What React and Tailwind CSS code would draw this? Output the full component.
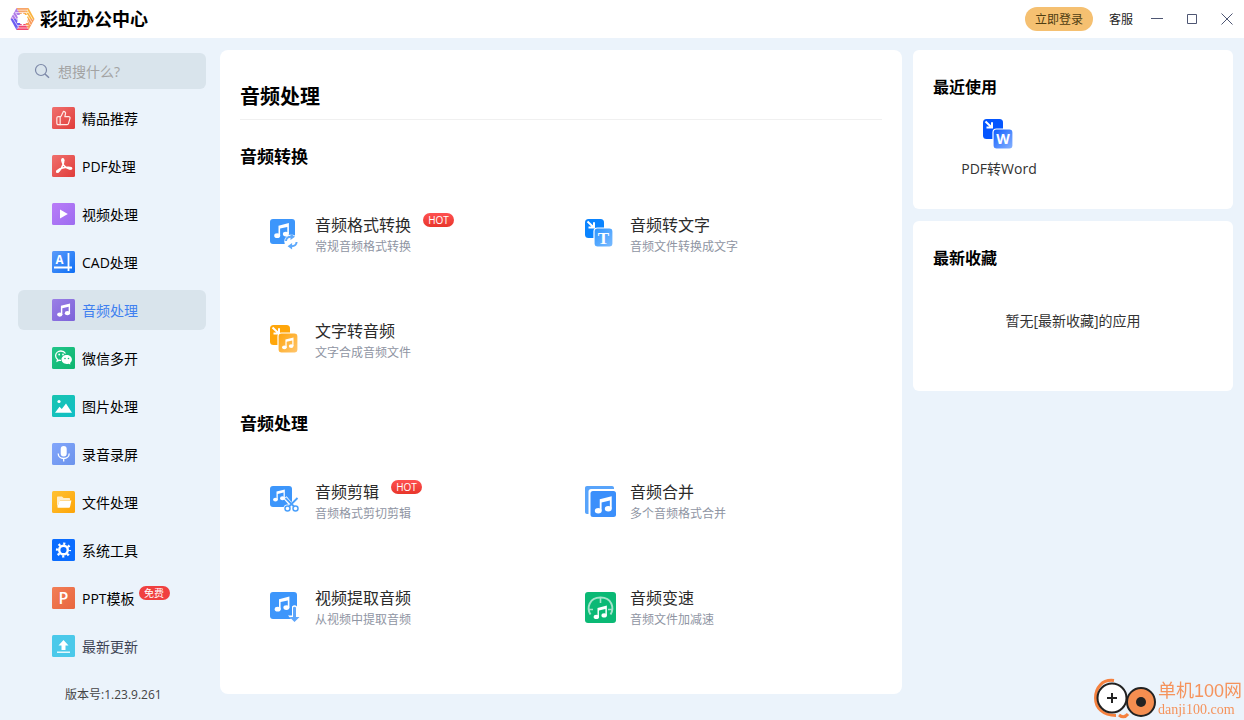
import React, { useState } from "react";
import { ThumbsUp } from "lucide-react";

const Tile = ({ from, to, children }) => {
  const id = `tile-${from}-${to}`.replaceAll("#", "");
  return (
    <svg width="23" height="22" viewBox="0 0 23 22" className="shrink-0" aria-hidden="true">
      <defs>
        <linearGradient id={id} x1="0" y1="0" x2="1" y2="1">
          <stop offset="0" stopColor={from} />
          <stop offset="1" stopColor={to} />
        </linearGradient>
      </defs>
      <rect width="23" height="22" rx="1.5" fill={`url(#${id})`} />
      {children}
    </svg>
  );
};

// double music note on a 16x16 box
const Note = ({ x, y, scale = 1, fill = "#fff" }) => (
  <g transform={`translate(${x} ${y}) scale(${scale})`} fill={fill}>
    <path d="M5 3.2 15.4.6v11H13.8V4.4L6.6 6.1v7.2H5z" />
    <ellipse cx="3.7" cy="13.2" rx="3" ry="2.4" />
    <ellipse cx="12.4" cy="11.6" rx="3" ry="2.4" />
  </g>
);

const navItems = [
  {
    name: "精品推荐",
    icon: (
      <Tile from="#f0706e" to="#e03c3a">
        <ThumbsUp x="3.5" y="3" width="16" height="16" color="#ffe9e6" strokeWidth={1.8} />
      </Tile>
    ),
  },
  {
    name: "PDF处理",
    icon: (
      <Tile from="#f0706e" to="#e03c3a">
        <path
          d="M10.6 3.8c1.6-.2 1.3 3 .4 5.800-1 2.900-4 7.800-5.800 7.700-1.600-.3.6-3 5.300-4.200 3.700-1 9-1.100 9.100.3 0 1.500-4.800.3-7.400-2.600-1.900-2.200-3.200-6.700-1.600-7z"
          fill="none"
          stroke="#fff"
          strokeWidth="1.500"
          strokeLinejoin="round"
        />
        <circle cx="5.800" cy="16.200" r="1.500" fill="#fff" />
        <circle cx="18.200" cy="13.300" r="1.300" fill="#fff" />
        <circle cx="10.900" cy="5.200" r="1.300" fill="#fff" />
      </Tile>
    ),
  },
  {
    name: "视频处理",
    icon: (
      <Tile from="#b97cf8" to="#9d6cf0">
        <path d="M8 6.500 15.800 11 8 15.500z" fill="#fff" />
      </Tile>
    ),
  },
  {
    name: "CAD处理",
    icon: (
      <Tile from="#5b9bfa" to="#0e6ff5">
        <text x="3.500" y="13" fontSize="11.500" fontWeight="700" fill="#fff">A</text>
        <path d="M16.500 2v18M2 16.500h18" stroke="#fff" strokeWidth="1.800" />
      </Tile>
    ),
  },
  {
    name: "音频处理",
    icon: (
      <Tile from="#9b80e6" to="#7c62d9">
        <Note x={4.5} y={4} scale={0.88} />
      </Tile>
    ),
  },
  {
    name: "微信多开",
    icon: (
      <Tile from="#22c58a" to="#0db56f">
        <path
          d="M13.500 6.500C12.600 5 10.900 4 8.900 4 5.900 4 3.600 6.100 3.600 8.700c0 1.500.8 2.800 2 3.700L5.200 14l2-.9c.6.2 1.200.3 1.800.3"
          fill="none"
          stroke="#fff"
          strokeWidth="1.300"
        />
        <circle cx="7.200" cy="7.500" r=".9" fill="#fff" />
        <circle cx="11" cy="7.500" r=".9" fill="#fff" />
        <path d="M14.700 8c2.900 0 5.200 2 5.200 4.500 0 1.400-.7 2.600-1.800 3.400l.3 1.700-1.900-.9c-.6.1-1.200.2-1.800.2-2.900 0-5.200-2-5.200-4.400S11.800 8 14.700 8z" fill="#fff" />
        <circle cx="13" cy="11.500" r=".8" fill="#19bf7e" />
        <circle cx="16.500" cy="11.500" r=".8" fill="#19bf7e" />
      </Tile>
    ),
  },
  {
    name: "图片处理",
    icon: (
      <Tile from="#19c4b0" to="#11bfc6">
        <circle cx="7" cy="6.500" r="1.600" fill="#fff" />
        <path d="M3 17.800 7.500 11.800 9.800 14 14 8.600 20 17.800z" fill="#fff" />
      </Tile>
    ),
  },
  {
    name: "录音录屏",
    icon: (
      <Tile from="#82a6fb" to="#6c93ec">
        <rect x="8.700" y="3" width="6" height="10.500" rx="3" fill="#fff" />
        <path d="M6.200 10.500c0 3 2.300 5 5.500 5s5.500-2 5.500-5M11.700 15.500v3" fill="none" stroke="#fff" strokeWidth="1.300" />
      </Tile>
    ),
  },
  {
    name: "文件处理",
    icon: (
      <Tile from="#ffc234" to="#fda408">
        <path d="M5 16V6.500c0-.6.400-1 1-1h4l1.600 1.500h5.400c.6 0 1 .4 1 1v1H8.200z" fill="#ffeecb" />
        <path d="M7.600 9.400h11.800L18 16c-.1.500-.5.800-1 .8H6c-.4 0-.7-.4-.6-.8z" fill="#fff" />
      </Tile>
    ),
  },
  {
    name: "系统工具",
    icon: (
      <Tile from="#0a6cff" to="#0a6cff">
        <circle cx="11.500" cy="11" r="4.300" fill="none" stroke="#fff" strokeWidth="2.400" />
        <circle cx="11.500" cy="11" r="6.400" fill="none" stroke="#fff" strokeWidth="2.400" strokeDasharray="2.200 2.827" strokeDashoffset="1.100" />
      </Tile>
    ),
  },
  {
    name: "PPT模板",
    badge: "免费",
    icon: (
      <Tile from="#f27e57" to="#e8663e">
        <text x="6.500" y="16.500" fontSize="16" fontWeight="600" fill="#fff">P</text>
      </Tile>
    ),
  },
  {
    name: "最新更新",
    muted: true,
    icon: (
      <Tile from="#4bc9ea" to="#4bc9ea">
        <path d="M11.500 5 16.500 10.500h-3v4.500h-4v-4.500h-3z" fill="#fff" />
        <path d="M5 17.200h13" stroke="#fff" strokeWidth="1.300" />
      </Tile>
    ),
  },
];

const ToolSvg = ({ children }) => (
  <svg width="32" height="32" viewBox="0 0 32 32" className="shrink-0" aria-hidden="true">
    {children}
  </svg>
);

// two stacked squares with an arrow going from the back one to the front one
const ConvertIcon = ({ id, back, from, to, size = 20, offset = 9, children }) => (
  <ToolSvg>
    <defs>
      <linearGradient id={id} x1="0" y1="0" x2="1" y2="1">
        <stop offset="0" stopColor={from} />
        <stop offset="1" stopColor={to} />
      </linearGradient>
    </defs>
    <rect x="0" y="1" width={size} height={size} rx="3.500" fill={back} />
    <path d="M2.500 3.500 8.300 9M9 4.200v5.300H3.500" fill="none" stroke="#fff" strokeWidth="2" />
    <rect x={offset} y={offset + 1} width={size} height={size} rx="3.500" fill={`url(#${id})`} stroke="#fff" strokeWidth="1.200" />
    {children}
  </ToolSvg>
);

const sections = [
  {
    title: "音频转换",
    tools: [
      {
        name: "音频格式转换",
        desc: "常规音频格式转换",
        hot: true,
        icon: (
          <ToolSvg>
            <rect x="0" y="1" width="25" height="25" rx="3" fill="#3d96fb" />
            <Note x={3.5} y={4.5} scale={1} />
            <circle cx="21.300" cy="23.500" r="7" fill="#fff" />
            <path d="M16 23c.2-2.700 2-4.200 5-4.200M26.600 24c-.2 2.700-2 4.200-5 4.200" fill="none" stroke="#5ea9fc" strokeWidth="2" />
            <path d="M20.500 15.500 25 18.800l-4.500 3.300zM22.100 31.500l-4.500-3.300 4.500-3.300z" fill="#5ea9fc" />
          </ToolSvg>
        ),
      },
      {
        name: "音频转文字",
        desc: "音频文件转换成文字",
        icon: (
          <ConvertIcon id="cv-text" back="#0a84ff" from="#2b93ff" to="#7cbcff" size={19}>
            <text x="18.500" y="25.500" fontSize="17" fontWeight="700" textAnchor="middle" fill="#fff" className="font-['Liberation_Serif',serif]">T</text>
          </ConvertIcon>
        ),
      },
      {
        name: "文字转音频",
        desc: "文字合成音频文件",
        icon: (
          <ConvertIcon id="cv-audio" back="#ffa60a" from="#ffa40a" to="#ffc670" offset={8}>
            <Note x={11.500} y={13} scale={0.78} />
          </ConvertIcon>
        ),
      },
    ],
  },
  {
    title: "音频处理",
    tools: [
      {
        name: "音频剪辑",
        desc: "音频格式剪切剪辑",
        hot: true,
        icon: (
          <ToolSvg>
            <rect x="0" y="1" width="22" height="21" rx="3" fill="#3d96fb" />
            <Note x={2.500} y={4} scale={0.8} />
            <path d="M15 12.500 24 23M28 13 18.500 23" stroke="#fff" strokeWidth="4" />
            <circle cx="17.500" cy="23.500" r="4" fill="#fff" />
            <path d="M15.500 13 24.500 22M27.500 13 18.500 22" stroke="#4ba0fb" strokeWidth="1.800" />
            <circle cx="17.500" cy="23.500" r="2.500" fill="#fff" stroke="#4ba0fb" strokeWidth="1.500" />
            <circle cx="25.500" cy="23.500" r="2.500" fill="#fff" stroke="#4ba0fb" strokeWidth="1.500" />
          </ToolSvg>
        ),
      },
      {
        name: "音频合并",
        desc: "多个音频格式合并",
        icon: (
          <ToolSvg>
            <path d="M2 1h25c1.200 0 2 .8 2 2v1H6C4.500 4 3.500 5 3.500 6.500V29H2c-1.200 0-2-.8-2-2V3c0-1.200.8-2 2-2z" fill="#58a4fb" />
            <rect x="5.500" y="6" width="25.500" height="26" rx="2.500" fill="#3b8ffb" />
            <Note x={9} y={10.500} scale={1.15} />
          </ToolSvg>
        ),
      },
      {
        name: "视频提取音频",
        desc: "从视频中提取音频",
        icon: (
          <ToolSvg>
            <rect x="0" y="1" width="27" height="27" rx="3" fill="#3d96fb" />
            <Note x={4} y={5} scale={1} />
            <path d="M22 15.500q2.500-2.500 5 0v9h4l-6.500 7-6.500-7h4z" fill="#fff" />
            <path d="M23 16.500q1.500-1.500 3 0v9.500h3.500L24.500 31l-5-5H23z" fill="#5ea6fb" />
          </ToolSvg>
        ),
      },
      {
        name: "音频变速",
        desc: "音频文件加减速",
        icon: (
          <ToolSvg>
            <rect x="0" y="1" width="31" height="31" rx="3" fill="#0bb975" />
            <path d="M5.500 23.500C1.500 17 4 6.500 15.500 6.500S29.500 17 25.500 23.500" fill="none" stroke="#a5e3cb" strokeWidth="2" />
            <path d="M15.500 7v5M4 18.500h4M27 18.500h-4" stroke="#a5e3cb" strokeWidth="1.600" />
            <Note x={8} y={14} scale={0.9} />
          </ToolSvg>
        ),
      },
    ],
  },
];

const Logo = () => (
  <svg width="25" height="24" viewBox="0 0 25 24" aria-hidden="true">
    <path d="M6.500 1h12l-2.800 6H8.500z" fill="#f7a56a" />
    <path d="M18.500 1 24.500 12H18L14.500 7z" fill="#fbb33f" />
    <path d="M24.500 12 18.500 23 15.500 17 18 12z" fill="#f99a57" />
    <path d="M18.500 23h-12l3-6h6z" fill="#f2456d" />
    <path d="M6.500 23 .5 12H7l3.500 5z" fill="#6d5df2" />
    <path d="M.5 12 6.500 1l3.500 6-3 5z" fill="#b07be8" />
    <path
      d="M4.700 4.500 9 11M3.200 7 9 16M1.800 9.800 9 21M7 3.200h11M6 5.500h12M17 3l6 10M15.500 4.800 22 15.500M15 8l5.500 10M7.500 18.500h11M6.500 21h12"
      stroke="#fff"
      strokeWidth=".8"
      opacity=".8"
    />
    <path d="M12.500 5.500 14.500 8h3.600L16.600 12l1.500 4h-3.600L12.500 18.500l-2-2.500H6.900L8.400 12 6.900 8h3.600z" fill="#fff" />
  </svg>
);

const Header = () => (
  <header className="flex h-[38px] items-center bg-white pr-[11px] pl-[10px]">
    <Logo />
    <h1 className="ml-[5px] text-lg font-bold">彩虹办公中心</h1>
    <button className="ml-auto h-6 w-[68px] rounded-full bg-[#f5c071] pt-0.5 text-xs text-[#4f3d12]">立即登录</button>
    <button className="mr-[18px] ml-4 pt-0.5 text-xs text-[#222]">客服</button>
    <div className="flex gap-[23px] text-[#4e5673]">
      <button aria-label="最小化">
        <svg width="12" height="12" viewBox="0 0 12 12">
          <path d="M0 5.500h12" stroke="currentColor" />
        </svg>
      </button>
      <button aria-label="最大化">
        <svg width="12" height="12" viewBox="0 0 12 12">
          <path d="M1.500 1.500h9v9h-9z" fill="none" stroke="currentColor" />
        </svg>
      </button>
      <button aria-label="关闭">
        <svg width="12" height="12" viewBox="0 0 12 12">
          <path d="M.5.5l11 11M11.500.5l-11 11" stroke="currentColor" />
        </svg>
      </button>
    </div>
  </header>
);

const Sidebar = ({ active, onSelect }) => (
  <aside className="w-[188px] shrink-0 pt-[3px]">
    <label className="flex h-9 items-center gap-2 rounded-md bg-[#d9e4ec] pr-2 pl-4">
      <svg width="16" height="16" viewBox="0 0 16 16" className="shrink-0" aria-hidden="true">
        <circle cx="7" cy="7" r="5.500" fill="none" stroke="#7c88a8" strokeWidth="1.200" />
        <path d="M11 11l4 3.800" stroke="#7c88a8" strokeWidth="1.500" />
      </svg>
      <input
        type="text"
        aria-label="搜索"
        placeholder="想搜什么?"
        className="w-full min-w-0 bg-transparent pt-0.5 text-sm outline-none placeholder:text-[#a3a3a3]"
      />
    </label>
    <nav className="mt-[9px] flex flex-col gap-2">
      {navItems.map((item) => (
        <button
          key={item.name}
          onClick={() => onSelect(item.name)}
          className={`flex h-10 items-center rounded-md pl-[34px] text-sm ${
            item.name === active ? "bg-[#d9e4ec] text-[#4080f0]" : item.muted ? "text-[#3d4354]" : "text-black"
          }`}
        >
          {item.icon}
          <span className="ml-[7px] pt-0.5">{item.name}</span>
          {item.badge && (
            <span className="mt-2 ml-1 h-[14px] w-[31px] self-start rounded-full bg-[#f04040] text-center text-[10px] leading-[14px] text-white">
              {item.badge}
            </span>
          )}
        </button>
      ))}
    </nav>
    <p className="mt-[19px] pl-[47px] text-xs leading-5 text-[#444]">版本号:1.23.9.261</p>
  </aside>
);

const ToolItem = ({ tool }) => (
  <button className="flex h-[106px] items-center gap-[13px] pl-[30px] text-left">
    {tool.icon}
    <span className="pt-0.5">
      <span className="flex items-start text-base leading-6 text-[#2b2b2b]">
        {tool.name}
        {tool.hot && (
          <span className="ml-3 h-[14px] w-[31px] rounded-full bg-linear-to-b from-[#ff5050] to-[#e8352a] text-center text-[10px] leading-[14px] text-white">
            HOT
          </span>
        )}
      </span>
      <span className="block text-xs leading-5 text-[#8f95a3]">{tool.desc}</span>
    </span>
  </button>
);

const Watermark = () => (
  <div className="fixed right-[2px] bottom-0 flex items-center gap-[2px] text-[#f5935c]">
    <svg width="62" height="42" viewBox="0 0 62 42" aria-hidden="true">
      <path d="M20 2.500C8 1 1.500 10 1.500 20S9 37.500 22 37.500" fill="none" stroke="#f5813f" strokeWidth="3" />
      <circle cx="18" cy="20" r="14.500" fill="#fff" stroke="#222" strokeWidth="2" />
      <path d="M13 20h10M18 15v10" stroke="#222" strokeWidth="2" />
      <circle cx="47" cy="24" r="14" fill="#f58e50" stroke="#222" strokeWidth="2" />
      <circle cx="47" cy="24" r="5" fill="#222" />
      <path d="M25 37q5 4 9-1" fill="none" stroke="#f5813f" strokeWidth="3" />
    </svg>
    <div>
      <p className="font-['Liberation_Sans','Noto_Sans_CJK_SC',sans-serif] text-lg leading-[22px]">单机100网</p>
      <p className="font-['Liberation_Serif',serif] text-sm leading-4">danji100.com</p>
    </div>
  </div>
);

const App = () => {
  const [active, setActive] = useState("音频处理");

  return (
    <div className="min-h-screen bg-[#ebf3fb] font-['Open_Sans','Noto_Sans_CJK_SC',sans-serif] text-black">
      <Header />
      <div className="flex items-start pt-3 pr-[11px] pb-2 pl-[18px]">
        <Sidebar active={active} onSelect={setActive} />

        <main className="ml-[14px] min-w-0 flex-1 rounded-lg bg-white px-5 pt-[33px] pb-[34px]">
          <h2 className="border-b border-[#f0f0f0] pb-2 text-xl leading-7 font-bold">音频处理</h2>
          <div className="flex flex-col gap-[18px] pt-6">
            {sections.map((section) => (
              <section key={section.title}>
                <h3 className="text-[17px] leading-[25px] font-bold">{section.title}</h3>
                <div className="mt-3 grid grid-cols-2 pr-3">
                  {section.tools.map((tool) => (
                    <ToolItem key={tool.name} tool={tool} />
                  ))}
                </div>
              </section>
            ))}
          </div>
        </main>

        <aside className="ml-[11px] flex w-80 shrink-0 flex-col gap-3">
          <section className="rounded-md bg-white px-5 pt-[25px] pb-[30px]">
            <h3 className="text-base leading-6 font-bold">最近使用</h3>
            <button className="mt-[19px] flex w-[132px] flex-col items-center gap-[9px] text-sm leading-5 text-[#333]">
              <ConvertIcon id="cv-word" back="#0456ff" from="#0b5bff" to="#8ab4ff" offset={10}>
                <text x="20" y="25.500" fontSize="14" fontWeight="700" textAnchor="middle" fill="#fff">W</text>
              </ConvertIcon>
              PDF转Word
            </button>
          </section>
          <section className="rounded-md bg-white px-5 pt-[25px] pb-[60px]">
            <h3 className="text-base leading-6 font-bold">最新收藏</h3>
            <p className="mt-[41px] text-center text-sm leading-5 text-[#333]">暂无[最新收藏]的应用</p>
          </section>
        </aside>
      </div>
      <Watermark />
    </div>
  );
};

export default App;
